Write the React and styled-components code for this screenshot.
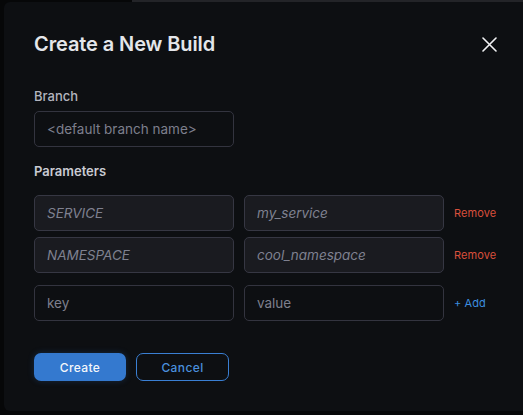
import React from "react";
import styled, { createGlobalStyle } from "styled-components";

const Global = createGlobalStyle`
  html, body { margin: 0; padding: 0; background: #060708; overflow: hidden; }
  body { font-family: Inter, "Noto Sans", sans-serif; }
  * { box-sizing: border-box; }
`;

const Page = styled.div`
  width: 523px;
  height: 415px;
  padding: 2px 0 0 4px;
  position: relative;
`;

const TopLine = styled.div`
  position: absolute;
  top: 0;
  left: 132px;
  right: 0;
  height: 2px;
  background: #232428;
`;

const Modal = styled.div`
  position: relative;
  width: 540px;
  height: 409px;
  background: #0d0f12;
  border-radius: 6px;
  padding: 30px 0 0 30px;
  display: flex;
  flex-direction: column;
`;

const Header = styled.div`
  display: flex;
  align-items: center;
  justify-content: space-between;
  width: 463px;
`;

const Title = styled.h1`
  margin: 0;
  font-size: 20px;
  line-height: 24px;
  font-weight: 600;
  color: #e4e6ea;
  letter-spacing: -0.1px;
`;

const CloseButton = styled.button`
  background: none;
  border: none;
  padding: 0;
  width: 16px;
  height: 16px;
  display: flex;
  align-items: center;
  justify-content: center;
  color: #f2f3f5;
  cursor: pointer;
`;

const Label = styled.div`
  font-size: 13px;
  line-height: 16px;
  font-weight: ${(p) => (p.$strong ? 600 : 500)};
  color: ${(p) => (p.$strong ? "#c9cbd3" : "#b3b5bf")};
  margin-top: ${(p) => p.$top}px;
`;

const Input = styled.input`
  width: 200px;
  height: 36px;
  border-radius: 5px;
  border: 1px solid ${(p) => (p.$filled ? "#363743" : "#33343f")};
  background: ${(p) => (p.$filled ? "#1a1b20" : "transparent")};
  color: #8b8d9b;
  font-family: Inter, "Noto Sans", sans-serif;
  font-size: 13.5px;
  font-style: ${(p) => (p.$filled ? "italic" : "normal")};
  padding: 0 12px;
  outline: none;
  &::placeholder {
    color: ${(p) => (p.$filled ? "#7f8190" : "#7d7f8d")};
    font-style: ${(p) => (p.$filled ? "italic" : "normal")};
  }
`;

const BranchInput = styled(Input)`
  margin-top: 7px;
`;

const Params = styled.div`
  display: flex;
  flex-direction: column;
  gap: 6px;
  margin-top: 16px;
`;

const Row = styled.div`
  display: flex;
  align-items: center;
  gap: 10px;
  margin-top: ${(p) => p.$top || 0}px;
`;

const LinkButton = styled.button`
  background: none;
  border: none;
  padding: 0;
  font-family: Inter, "Noto Sans", sans-serif;
  font-size: 11px;
  font-weight: 400;
  color: ${(p) => (p.$danger ? "#d9503c" : "#3c8ddf")};
  cursor: pointer;
  letter-spacing: 0.1px;
`;

const Actions = styled.div`
  display: flex;
  gap: 10px;
  margin-top: 32px;
`;

const Button = styled.button`
  width: ${(p) => p.$w}px;
  height: 28px;
  border-radius: 7px;
  font-family: Inter, "Noto Sans", sans-serif;
  font-size: 12px;
  font-weight: 500;
  letter-spacing: 0.4px;
  cursor: pointer;
  border: ${(p) => (p.$primary ? "none" : "1.5px solid #3a7fd3")};
  background: ${(p) => (p.$primary ? "#3479cf" : "transparent")};
  color: ${(p) => (p.$primary ? "#f4f7fb" : "#4a8fdd")};
  box-shadow: ${(p) => (p.$primary ? "0 0 6px rgba(52,121,207,0.25)" : "none")};
`;

const params = [
  { key: "SERVICE", value: "my_service" },
  { key: "NAMESPACE", value: "cool_namespace" },
];

export default function App() {
  return (
    <>
      <Global />
      <Page>
        <TopLine />
        <Modal>
          <Header>
            <Title>Create a New Build</Title>
            <CloseButton aria-label="Close">
              <svg width="15" height="15" viewBox="0 0 15 15">
                <path d="M1 1 L14 14 M14 1 L1 14" stroke="currentColor" strokeWidth="1.6" strokeLinecap="round" />
              </svg>
            </CloseButton>
          </Header>
          <Label $top={32}>Branch</Label>
          <BranchInput placeholder="<default branch name>" />
          <Label $strong $top={16}>Parameters</Label>
          <Params>
            {params.map((p) => (
              <Row key={p.key}>
                <Input $filled placeholder={p.key} readOnly />
                <Input $filled placeholder={p.value} readOnly />
                <LinkButton $danger>Remove</LinkButton>
              </Row>
            ))}
          </Params>
          <Row $top={12}>
            <Input placeholder="key" />
            <Input placeholder="value" />
            <LinkButton>+ Add</LinkButton>
          </Row>
          <Actions>
            <Button $primary $w={92}>Create</Button>
            <Button $w={93}>Cancel</Button>
          </Actions>
        </Modal>
      </Page>
    </>
  );
}
